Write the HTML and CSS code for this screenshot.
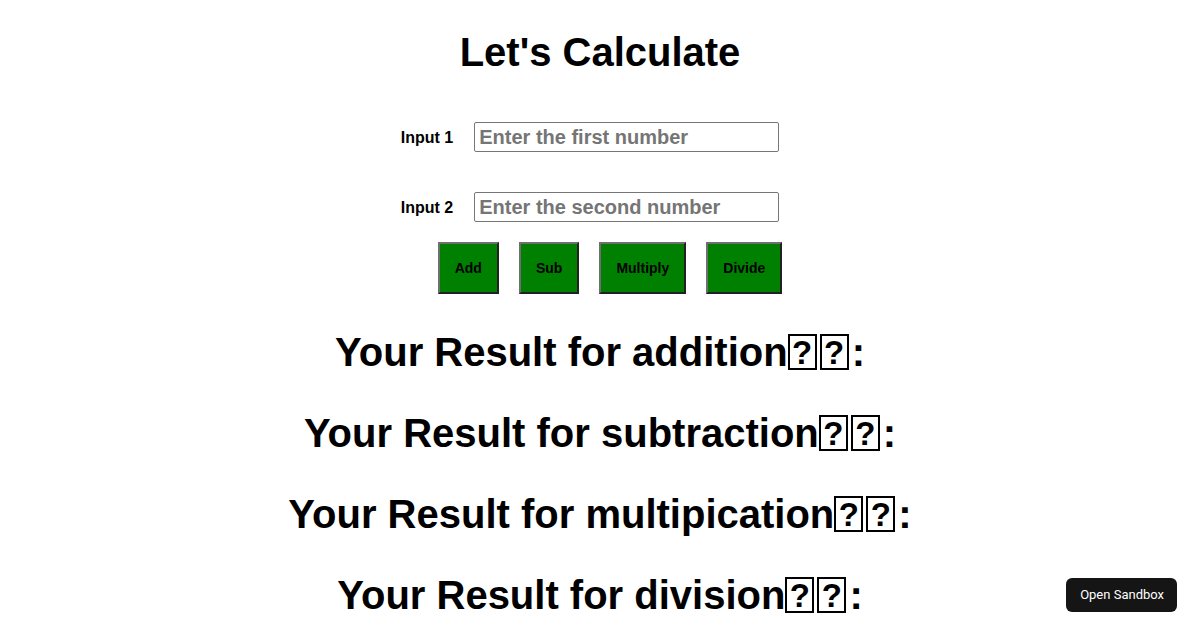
FILE: index.html
```html
<!DOCTYPE html>
<html lang="en">
<head>
  <meta charset="UTF-8" />
  <meta name="viewport" content="width=device-width, initial-scale=1" />
  <title>Calculator</title>
  <link rel="stylesheet" href="styles.css">
</head>
<body>

<h1 class="title">Let's Calculate</h1>

<div class="field">
  <label for="num1">Input 1</label>
  <input type="number" id="num1" placeholder="Enter the first number" />
</div>

<div class="field">
  <label for="num2">Input 2</label>
  <input type="number" id="num2" placeholder="Enter the second number" />
</div>

<div class="actions">
  <button>Add</button>
  <button>Sub</button>
  <button>Multiply</button>
  <button>Divide</button>
</div>

<h1 class="result">Your Result for addition<span class="tofu">?</span><span class="tofu">?</span>:</h1>
<h1 class="result">Your Result for subtraction<span class="tofu">?</span><span class="tofu">?</span>:</h1>
<h1 class="result">Your Result for multipication<span class="tofu">?</span><span class="tofu">?</span>:</h1>
<h1 class="result">Your Result for division<span class="tofu">?</span><span class="tofu">?</span>:</h1>

<a class="sandbox-btn" href="#">Open Sandbox</a>

</body>
</html>
```

FILE: styles.css
```css
body {
  margin: 0;
  font-family: "Liberation Sans", Arial, sans-serif;
  text-align: center;
  color: #000;
  background: #fff;
}

h1 {
  font-size: 40px;
  line-height: 46px;
  font-weight: bold;
}

.title {
  margin: 29px 0 47px;
}

.field {
  display: flex;
  justify-content: center;
  align-items: center;
  gap: 21px;
  padding-right: 20px;
  margin-bottom: 40px;
}

.field label {
  font-size: 16px;
  font-weight: bold;
  padding-top: 2px;
}

.field input {
  box-sizing: border-box;
  width: 305px;
  height: 30px;
  padding: 1px 4px;
  font-family: inherit;
  font-size: 20px;
  font-weight: bold;
  border: 1px solid #767676;
  border-radius: 2px;
}

.field input::placeholder {
  color: #757575;
}

.field + .field {
  margin-bottom: 20px;
}

.actions {
  display: flex;
  justify-content: center;
  gap: 20px;
  padding-left: 20px;
}

.actions button {
  height: 52px;
  padding: 0 15px;
  font-family: inherit;
  font-size: 14px;
  font-weight: bold;
  color: #000;
  background: #008000;
  border: 2px solid;
  border-color: #6f6f6f #222 #222 #6f6f6f;
}

.result {
  margin: 35px 0;
}

.tofu {
  display: inline-block;
  overflow: hidden;
  box-sizing: border-box;
  width: 29px;
  height: 36px;
  margin-right: 3px;
  border: 2px solid #000;
  font-size: 33px;
  line-height: 33px;
  vertical-align: -4px;
}

.sandbox-btn {
  position: fixed;
  right: 23px;
  bottom: 18px;
  height: 34px;
  line-height: 34px;
  padding: 0 13px 0 14px;
  border-radius: 6px;
  background: #151515;
  color: #fff;
  font-family: Roboto, "Liberation Sans", sans-serif;
  font-size: 13px;
  text-decoration: none;
}
```
